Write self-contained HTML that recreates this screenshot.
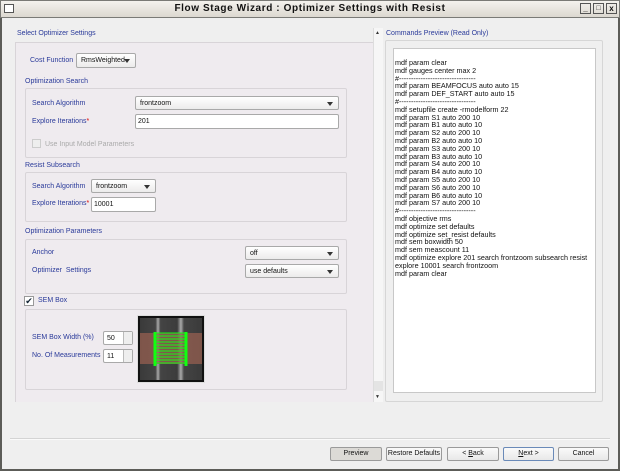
<!DOCTYPE html>
<html><head><style>
*{margin:0;padding:0;box-sizing:border-box}
body{width:620px;height:471px;overflow:hidden;background:#efefef;font-family:"Liberation Sans",sans-serif;font-size:7px;color:#111;position:relative}
.a{position:absolute}
.lbl{position:absolute;color:#2a3a9a;font-size:7px;white-space:nowrap}
.grp{position:absolute;border:1px solid #d8d4d8;border-radius:2px}
.cb{position:absolute;background:linear-gradient(#fff,#ecebeb);border:1px solid #a9a9a9;border-radius:2px;font-size:7px;padding:3px 4px;line-height:7px;white-space:nowrap}
.cb:after{content:"";position:absolute;right:5px;top:5px;border-left:3px solid transparent;border-right:3px solid transparent;border-top:4px solid #333}
.in{position:absolute;background:#fff;border:1px solid #a9a9a9;border-radius:2px;font-size:7px;padding:3px 2px;line-height:7px}
.btn{position:absolute;top:447px;height:14px;background:linear-gradient(#fafafa,#e8e8e8);border:1px solid #9a9a9a;border-radius:2px;font-size:7px;text-align:center;line-height:12px;white-space:nowrap}
.sp{position:absolute;background:#fff;border:1px solid #a9a9a9;border-radius:2px;font-size:7px;padding:3px 3px;line-height:7px}
.sp i{position:absolute;right:0;top:0;width:9px;height:100%;border-left:1px solid #bbb;background:#eee}
</style></head><body>
<div class="a" style="left:0;top:0;width:620px;height:471px;border:2px solid #5c5c58;border-top:none"></div>
<div class="a" style="left:0;top:0;width:620px;height:18px;background:linear-gradient(#f4f2ee,#dcd8d0);border:1px solid #7a7a76"></div>
<div class="a" style="left:4px;top:4px;width:10px;height:9px;border:1px solid #555;background:#fff"></div>
<div class="a" style="left:0;top:3px;width:620px;text-align:center;font-weight:bold;font-size:10px;letter-spacing:0.6px;color:#111">Flow Stage Wizard : Optimizer Settings with Resist</div>
<div class="a" style="left:580px;top:3px;width:11px;height:11px;border:1px solid #555;font-size:8px;line-height:9px;text-align:center;font-weight:bold">_</div>
<div class="a" style="left:593px;top:3px;width:11px;height:11px;border:1px solid #555;font-size:7px;line-height:9px;text-align:center;font-weight:bold">□</div>
<div class="a" style="left:606px;top:3px;width:11px;height:11px;border:1px solid #555;font-size:8px;line-height:9px;text-align:center;font-weight:bold">x</div>

<div class="lbl" style="left:17px;top:30px">Select Optimizer Settings</div>
<div class="a" style="left:15px;top:42px;width:358px;height:360px;background:#efebef;border-left:1px solid #d8d4d8;border-top:1px solid #d8d4d8"></div>
<div class="lbl" style="left:30px;top:57px">Cost Function</div>
<div class="cb" style="left:76px;top:53px;width:60px;height:15px">RmsWeighted</div>
<div class="lbl" style="left:25px;top:78px">Optimization Search</div>
<div class="grp" style="left:25px;top:88px;width:322px;height:70px"></div>
<div class="lbl" style="left:32px;top:100px">Search Algorithm</div>
<div class="cb" style="left:135px;top:96px;width:204px;height:14px">frontzoom</div>
<div class="lbl" style="left:32px;top:118px">Explore Iterations<span style="color:#d00">*</span></div>
<div class="in" style="left:135px;top:114px;width:204px;height:15px">201</div>
<div class="a" style="left:32px;top:139px;width:9px;height:9px;border:1px solid #ccc;background:#eee"></div>
<div class="a" style="left:45px;top:141px;color:#aaa">Use Input Model Parameters</div>
<div class="lbl" style="left:25px;top:162px">Resist Subsearch</div>
<div class="grp" style="left:25px;top:172px;width:322px;height:50px"></div>
<div class="lbl" style="left:32px;top:183px">Search Algorithm</div>
<div class="cb" style="left:91px;top:179px;width:65px;height:14px">frontzoom</div>
<div class="lbl" style="left:32px;top:200px">Explore Iterations<span style="color:#d00">*</span></div>
<div class="in" style="left:91px;top:197px;width:65px;height:15px">10001</div>
<div class="lbl" style="left:25px;top:228px">Optimization Parameters</div>
<div class="grp" style="left:25px;top:239px;width:322px;height:55px"></div>
<div class="lbl" style="left:32px;top:249px">Anchor</div>
<div class="cb" style="left:245px;top:246px;width:94px;height:14px">off</div>
<div class="lbl" style="left:32px;top:267px">Optimizer &nbsp;Settings</div>
<div class="cb" style="left:245px;top:264px;width:94px;height:14px">use defaults</div>
<div class="a" style="left:24px;top:296px;width:10px;height:10px;border:1px solid #999;background:#fff;font-size:9px;line-height:8px;text-align:center;color:#123">✔</div>
<div class="lbl" style="left:38px;top:297px">SEM Box</div>
<div class="grp" style="left:25px;top:309px;width:322px;height:81px"></div>
<div class="lbl" style="left:32px;top:334px">SEM Box Width (%)</div>
<div class="sp" style="left:103px;top:331px;width:30px;height:14px">50<i></i></div>
<div class="lbl" style="left:32px;top:352px">No. Of Measurements</div>
<div class="sp" style="left:103px;top:349px;width:30px;height:14px">11<i></i></div>
<div class="a" style="left:137px;top:315px;width:68px;height:68px;background:#111;border:1px solid #ddd"></div>
<div class="a" style="left:140px;top:318px;width:62px;height:62px;background:linear-gradient(90deg,#3a3a3a 0,#444 25%,#aaa 29%,#444 33%,#3c3c3c 60%,#aaa 66%,#444 71%,#3a3a3a 100%)"></div>
<div class="a" style="left:140px;top:333px;width:62px;height:31px;background:rgba(150,95,80,.75)"></div>
<svg class="a" style="left:140px;top:318px" width="62" height="62">
<path d="M15 14V48M46 14V48M15 15H46M15 18H46M15 21H46M15 24H46M15 27H46M15 30H46M15 33H46M15 36H46M15 39H46M15 42H46M15 45H46" stroke="#1f1" stroke-width="1"/>
<path d="M14 14V48M16 14V48M45 14V48M47 14V48" stroke="#1f1" stroke-width="1"/>
</svg>

<div class="a" style="left:373px;top:28px;width:10px;height:374px;background:#f6f6f6;border-left:1px solid #ddd"></div>
<div class="a" style="left:375px;top:30px;font-size:5px;color:#333">▲</div>
<div class="a" style="left:375px;top:394px;font-size:5px;color:#333">▼</div>
<div class="a" style="left:374px;top:381px;width:9px;height:10px;background:#e4e4e4"></div>

<div class="lbl" style="left:386px;top:30px">Commands Preview (Read Only)</div>
<div class="a" style="left:385px;top:40px;width:218px;height:362px;border:1px solid #d6d6d6;border-radius:2px"></div>
<div class="a" style="left:393px;top:48px;width:203px;height:345px;background:#fff;border:1px solid #c8c8c8"></div>
<div class="a" style="left:395px;top:59px;font-size:7.2px;line-height:7.8px;white-space:pre;color:#111">mdf param clear
mdf gauges center max 2
#--------------------------------
mdf param BEAMFOCUS auto auto 15
mdf param DEF_START auto auto 15
#--------------------------------
mdf setupfile create -rmodelform 22
mdf param S1 auto 200 10
mdf param B1 auto auto 10
mdf param S2 auto 200 10
mdf param B2 auto auto 10
mdf param S3 auto 200 10
mdf param B3 auto auto 10
mdf param S4 auto 200 10
mdf param B4 auto auto 10
mdf param S5 auto 200 10
mdf param S6 auto 200 10
mdf param B6 auto auto 10
mdf param S7 auto 200 10
#--------------------------------
mdf objective rms
mdf optimize set defaults
mdf optimize set_resist defaults
mdf sem boxwidth 50
mdf sem meascount 11
mdf optimize explore 201 search frontzoom subsearch resist
explore 10001 search frontzoom
mdf param clear</div>

<div class="a" style="left:10px;top:438px;width:600px;height:2px;background:#d4d4d4;border-bottom:1px solid #fafafa"></div>
<div class="btn" style="left:330px;width:52px;background:#dcdad6">Preview</div>
<div class="btn" style="left:386px;width:56px">Restore Defaults</div>
<div class="btn" style="left:447px;width:52px">&lt; <u>B</u>ack</div>
<div class="btn" style="left:503px;width:51px;border-color:#6a8ab8"><u>N</u>ext &gt;</div>
<div class="btn" style="left:558px;width:51px">Cancel</div>
</body></html>
